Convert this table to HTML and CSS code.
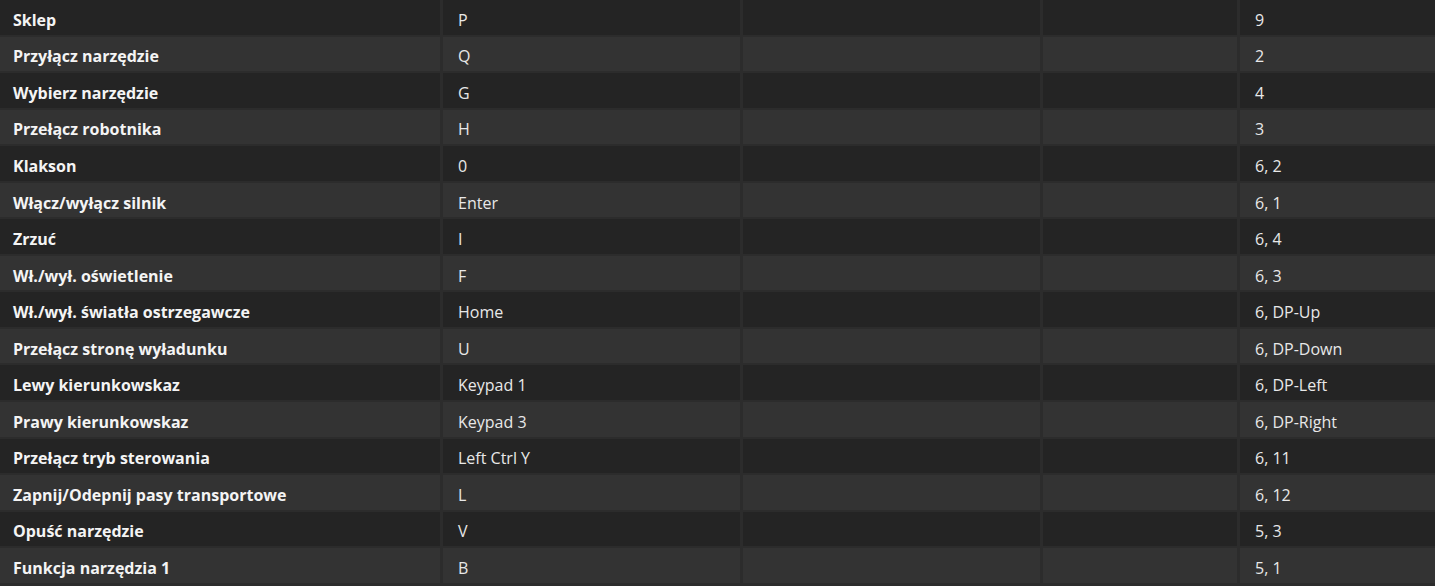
FILE: index.html
```html
<!DOCTYPE html>
<html lang="pl">
<head>
<meta charset="utf-8">
<link rel="stylesheet" href="styles.css">
</head>
<body>
<div class="table">
  <div class="row dark"><div class="cell name">Sklep</div><div class="cell">P</div><div class="cell"></div><div class="cell"></div><div class="cell">9</div></div>
  <div class="row light"><div class="cell name">Przyłącz narzędzie</div><div class="cell">Q</div><div class="cell"></div><div class="cell"></div><div class="cell">2</div></div>
  <div class="row dark"><div class="cell name">Wybierz narzędzie</div><div class="cell">G</div><div class="cell"></div><div class="cell"></div><div class="cell">4</div></div>
  <div class="row light"><div class="cell name">Przełącz robotnika</div><div class="cell">H</div><div class="cell"></div><div class="cell"></div><div class="cell">3</div></div>
  <div class="row dark"><div class="cell name">Klakson</div><div class="cell">0</div><div class="cell"></div><div class="cell"></div><div class="cell">6, 2</div></div>
  <div class="row light"><div class="cell name">Włącz/wyłącz silnik</div><div class="cell">Enter</div><div class="cell"></div><div class="cell"></div><div class="cell">6, 1</div></div>
  <div class="row dark"><div class="cell name">Zrzuć</div><div class="cell">I</div><div class="cell"></div><div class="cell"></div><div class="cell">6, 4</div></div>
  <div class="row light"><div class="cell name">Wł./wył. oświetlenie</div><div class="cell">F</div><div class="cell"></div><div class="cell"></div><div class="cell">6, 3</div></div>
  <div class="row dark"><div class="cell name">Wł./wył. światła ostrzegawcze</div><div class="cell">Home</div><div class="cell"></div><div class="cell"></div><div class="cell">6, DP-Up</div></div>
  <div class="row light"><div class="cell name">Przełącz stronę wyładunku</div><div class="cell">U</div><div class="cell"></div><div class="cell"></div><div class="cell">6, DP-Down</div></div>
  <div class="row dark"><div class="cell name">Lewy kierunkowskaz</div><div class="cell">Keypad 1</div><div class="cell"></div><div class="cell"></div><div class="cell">6, DP-Left</div></div>
  <div class="row light"><div class="cell name">Prawy kierunkowskaz</div><div class="cell">Keypad 3</div><div class="cell"></div><div class="cell"></div><div class="cell">6, DP-Right</div></div>
  <div class="row dark"><div class="cell name">Przełącz tryb sterowania</div><div class="cell">Left Ctrl Y</div><div class="cell"></div><div class="cell"></div><div class="cell">6, 11</div></div>
  <div class="row light"><div class="cell name">Zapnij/Odepnij pasy transportowe</div><div class="cell">L</div><div class="cell"></div><div class="cell"></div><div class="cell">6, 12</div></div>
  <div class="row dark"><div class="cell name">Opuść narzędzie</div><div class="cell">V</div><div class="cell"></div><div class="cell"></div><div class="cell">5, 3</div></div>
  <div class="row light"><div class="cell name">Funkcja narzędzia 1</div><div class="cell">B</div><div class="cell"></div><div class="cell"></div><div class="cell">5, 1</div></div>
</div>
</body>
</html>
```

FILE: styles.css
```css
html, body {
  margin: 0;
  padding: 0;
  background: #2c2c2c;
  overflow: hidden;
}
.table {
  display: flex;
  flex-direction: column;
  gap: 2px;
  margin-top: 0;
  font-family: "Open Sans", "Noto Sans", sans-serif;
  font-size: 16px;
  color: #e8e8e8;
}
.row {
  display: grid;
  grid-template-columns: 440px 297px 297px 194px 1fr;
  column-gap: 3px;
  height: 34.55px;
}
.cell {
  display: flex;
  align-items: center;
  padding: 5px 15px 0;
  white-space: nowrap;
}
.cell.name {
  padding-left: 13px;
  font-weight: 700;
  color: #f4f4f4;
}
.dark .cell { background: #242424; }
.light .cell { background: #333333; }
```
